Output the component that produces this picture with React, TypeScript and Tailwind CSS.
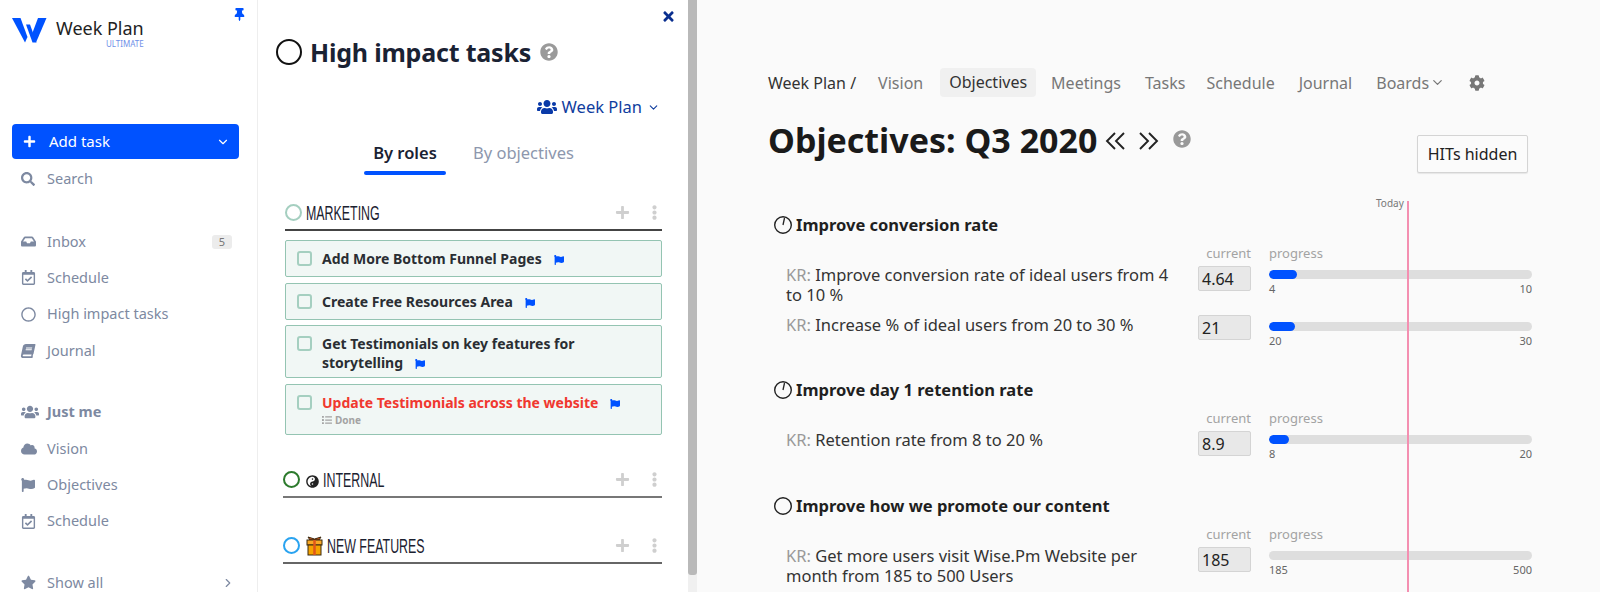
import React from "react";
import { ChevronDown, ChevronRight } from "lucide-react";
import {
  FaPlus, FaSearch, FaInbox, FaRegCalendarCheck, FaRegCircle, FaBook, FaUsers, FaCloud, FaFlag, FaStar,
  FaThumbtack, FaTimes, FaQuestionCircle, FaCog, FaEllipsisV, FaList, FaYinYang,
} from "react-icons/fa";

function Logo() {
  return (
    <svg width="36" height="26" viewBox="0 0 36 26" className="shrink-0">
      <path d="M0 1 H8.5 L15.5 20 L13 25.5 Z" fill="#0052ff" />
      <path d="M14 7.5 H18 L24.5 25.5 H20.5 Z" fill="#0052ff" />
      <path d="M34.5 1 H26 L20 17 L24 25.5 Z" fill="#0052ff" />
    </svg>
  );
}

function NavItem({ icon, label, bold, right }: { icon: React.ReactNode; label: string; bold?: boolean; right?: React.ReactNode }) {
  return (
    <div className={`flex items-center h-[36.4px] pl-[21px] pr-[22px] text-[14.5px] text-[#7d89a1] ${bold ? "font-bold" : ""}`}>
      <span className="w-[26px] flex items-center shrink-0">{icon}</span>
      <span className="flex-1">{label}</span>
      {right}
    </div>
  );
}

function Flag() {
  return <FaFlag size={10} className="text-[#0052ff] ml-3 inline-block align-[-1px]" />;
}

function Task({ title, red, sub }: { title: React.ReactNode; red?: boolean; sub?: boolean }) {
  return (
    <div className="border border-[#94c4b2] rounded-[2px] bg-[#f1f7f5] flex min-h-[37px] pl-[11px] pr-3 pt-[8px] pb-[5px] mb-[5.5px]">
      <span className="w-[15px] h-[15px] border-2 border-[#a5cfc0] rounded-[3px] shrink-0 mt-[2px] mr-[10px]" />
      <div className="flex-1">
        <div className={`text-[14px] leading-[19px] font-bold ${red ? "text-[#f0382f]" : "text-[#2a2e33]"}`}>{title}</div>
        {sub && (
          <div className="flex items-center text-[10px] font-bold leading-[17px] text-[#a3a3a3]">
            <FaList size={10} className="mr-[3px]" />
            Done
          </div>
        )}
      </div>
    </div>
  );
}

function RoleHead({ ring, icon, label, border }: { ring: string; icon?: React.ReactNode; label: string; border: string }) {
  return (
    <div className={`flex items-center h-[31px] border-b-2 ${border}`}>
      <span className={`w-[17px] h-[17px] rounded-full border-2 shrink-0 -mt-[4px] ${ring}`} />
      {icon}
      <span className="ml-[4px] -mt-[3px] inline-block origin-left scale-x-[0.62] whitespace-nowrap text-[20px] leading-[24px] text-[#1b2130] [font-family:'Liberation_Sans',sans-serif]">{label}</span>
      <span className="flex-1" />
      <FaPlus size={15} className="text-[#cfcfcf] mr-[17px] -mt-[4px]" />
      <FaEllipsisV size={15} className="text-[#cfcfcf] -mt-[4px]" />
    </div>
  );
}

function Gift() {
  return (
    <svg width="17" height="20" viewBox="0 0 17 20" className="ml-[6px] -mt-[3px] shrink-0">
      <path d="M4 4 L2 1 L8.5 3 L15 1 L13 4 Z" fill="#e0561a" stroke="#3a2a10" strokeWidth="1" />
      <rect x="1" y="4" width="15" height="5" fill="#f9a825" stroke="#3a2a10" strokeWidth="1" />
      <rect x="2" y="9" width="13" height="10" fill="#f5a300" stroke="#3a2a10" strokeWidth="1" />
      <rect x="7.25" y="4" width="2.5" height="15" fill="#e0561a" />
    </svg>
  );
}

function ObjIcon({ tick }: { tick?: boolean }) {
  return (
    <svg width="20" height="20" viewBox="0 0 20 20" className="shrink-0">
      <circle cx="10" cy="10" r="8.3" fill="none" stroke="#222" strokeWidth="1.4" />
      {tick && <path d="M10 10 L11.5 3" stroke="#222" strokeWidth="1.3" />}
    </svg>
  );
}

function DoubleChevron({ flip }: { flip?: boolean }) {
  return (
    <svg width="20" height="18" viewBox="0 0 20 18" className={`shrink-0 ${flip ? "-scale-x-100" : ""}`}>
      <path d="M10 1 L2 9 L10 17 M19 1 L11 9 L19 17" fill="none" stroke="#222" strokeWidth="1.9" />
    </svg>
  );
}

function KR({ text, value, pct, min, max, head, mt }: { text: string; value: string; pct: number; min: string; max: string; head?: boolean; mt: string }) {
  return (
    <div className={`flex ${mt}`}>
      <div className={`w-[430px] shrink-0 pl-[18px] pr-[28px] text-[16.5px] leading-[20px] text-[#333] ${head ? "pt-[22px]" : ""}`}>
        <span className="text-[#999]">KR: </span>
        {text}
      </div>
      <div className="w-[53px] shrink-0">
        {head && <div className="text-[13px] leading-[20px] h-[20px] text-[#a3a3a3] text-right mb-[3px]">current</div>}
        <div className="h-[25px] border border-[#d4d4d4] rounded-[2px] bg-[#e8e8e8] text-[16px] leading-[25px] pl-[3px] text-[#222]">{value}</div>
      </div>
      <div className="ml-[18px] w-[263px] shrink-0">
        {head && <div className="text-[13px] leading-[20px] h-[20px] text-[#a3a3a3] mb-[3px]">progress</div>}
        <div className="mt-[7px] h-[9px] rounded-full bg-[#dedede] overflow-hidden">
          <div className="h-full rounded-full bg-[#0052ff]" style={{ width: `${pct}px` }} />
        </div>
        <div className="flex justify-between text-[11px] leading-[14px] mt-[3px] text-[#666]">
          <span>{min}</span>
          <span>{max}</span>
        </div>
      </div>
    </div>
  );
}

function Objective({ title, tick, children, mt }: { title: string; tick?: boolean; children: React.ReactNode; mt: string }) {
  return (
    <div className={mt}>
      <div className="flex items-center h-[20px] pl-[5px] gap-[3px] text-[16.5px] font-bold text-[#1f1f1f]">
        <ObjIcon tick={tick} />
        <span>{title}</span>
      </div>
      {children}
    </div>
  );
}

export default function App() {
  return (
    <div className="flex h-[592px] w-[1600px] overflow-hidden bg-white [font-family:'Noto_Sans','Open_Sans',sans-serif]">
      {/* sidebar */}
      <aside className="relative w-[258px] shrink-0 border-r border-[#eeeeee] pt-[17px]">
        <FaThumbtack size={13} className="absolute left-[233px] top-[8px] text-[#0052ff]" />
        <div className="flex pl-[12px] h-[107px]">
          <Logo />
          <div className="ml-[8px] -mt-[1px]">
            <div className="text-[18px] leading-[24px] text-[#222]">Week Plan</div>
            <div className="text-[8px] leading-[8px] text-right text-[#6f8fe8]">ULTIMATE</div>
          </div>
        </div>
        <div className="mx-[12px] h-[35px] w-[227px] rounded-[4px] bg-[#0052ff] text-white flex items-center pl-[11px] pr-[9px] text-[15px]">
          <FaPlus size={13} />
          <span className="ml-[13px] flex-1">Add task</span>
          <ChevronDown size={14} />
        </div>
        <div className="h-[2px]" />
        <NavItem icon={<FaSearch size={14} />} label="Search" />
        <div className="h-[26px]" />
        <NavItem
          icon={<FaInbox size={15} />}
          label="Inbox"
          right={<span className="mr-[3px] px-[7px] rounded-[3px] bg-[#ececec] text-[11px] leading-[14px] text-[#777]">5</span>}
        />
        <NavItem icon={<FaRegCalendarCheck size={15} />} label="Schedule" />
        <NavItem icon={<FaRegCircle size={15} />} label="High impact tasks" />
        <NavItem icon={<FaBook size={14} className="-skew-x-12" />} label="Journal" />
        <div className="h-[25px]" />
        <NavItem icon={<FaUsers size={18} />} label="Just me" bold />
        <NavItem icon={<FaCloud size={16} />} label="Vision" />
        <NavItem icon={<FaFlag size={14} />} label="Objectives" />
        <NavItem icon={<FaRegCalendarCheck size={15} />} label="Schedule" />
        <div className="h-[25px]" />
        <NavItem icon={<FaStar size={15} />} label="Show all" right={<ChevronRight size={14} />} />
      </aside>

      {/* panel */}
      <section className="relative w-[430px] shrink-0 px-[26px] pt-[34px]">
        <FaTimes size={15} className="absolute left-[403px] top-[9px] text-[#0a2f8f]" />
        <div className="-ml-[8px] flex items-center h-[36px]">
          <span className="w-[26px] h-[26px] rounded-full border-2 border-[#111] shrink-0" />
          <h1 className="ml-[8px] text-[25px] leading-[36px] font-bold tracking-[-0.2px] text-[#1a2233]">High impact tasks</h1>
          <FaQuestionCircle size={18} className="ml-[9px] text-[#9a9a9a]" />
        </div>
        <div className="flex items-center justify-end h-[24px] mt-[25px] mr-[2px] text-[16.5px] text-[#0f3d9e]">
          <FaUsers size={20} className="mr-[5px] text-[#0a3aa8]" />
          Week Plan
          <ChevronDown size={13} className="ml-[5px]" />
        </div>
        <div className="flex pl-[80px] mt-[20px] text-[16.5px] leading-[28px]">
          <div className="w-[82px] text-center font-semibold text-[#1a2233]">
            By roles
            <span className="block h-[4px] rounded-full bg-[#0052ff] mt-[4px]" />
          </div>
          <div className="ml-[27px] text-[#8d97ad]">By objectives</div>
        </div>
        <div className="ml-[1px] mt-[25px] w-[377px]">
          <RoleHead ring="border-[#a5cfc0]" label="MARKETING" border="border-[#444]" />
          <div className="h-[9px]" />
          <Task title={<>Add More Bottom Funnel Pages<Flag /></>} />
          <Task title={<>Create Free Resources Area<Flag /></>} />
          <Task title={<>Get Testimonials on key features for storytelling<Flag /></>} />
          <Task red sub title={<>Update Testimonials across the website<Flag /></>} />
          <div className="mt-[32px] -ml-[2px]">
            <RoleHead
              ring="border-[#2c7a2c]"
              icon={<FaYinYang size={13} className="ml-[6px] text-[#222]" />}
              label="INTERNAL"
              border="border-[#777]"
            />
          </div>
          <div className="mt-[35px] -ml-[2px]">
            <RoleHead ring="border-[#29a3f0]" icon={<Gift />} label="NEW FEATURES" border="border-[#666]" />
          </div>
        </div>
      </section>

      {/* panel scrollbar */}
      <div className="w-[9px] shrink-0 bg-[#f0f0f0]">
        <div className="h-[575px] bg-[#b9b9b9] rounded-b-[3px]" />
      </div>

      {/* main */}
      <main className="relative flex-1 bg-[#fafafa] pl-[71px] pr-[68px] pt-[68px] text-[#222]">
        <div className="absolute left-[710px] top-[201px] bottom-0 w-[2px] bg-[#f48fb1]" />
        <div className="absolute left-[679px] top-[196px] text-[10px] leading-[14px] text-[#777]">Today</div>

        <nav className="flex items-center h-[29px] text-[16px] text-[#777]">
          <span className="text-[#333] mr-[12px]">Week Plan /</span>
          <span className="px-[9px] ml-[1px] mr-[8px]">Vision</span>
          <span className="px-[9px] h-[29px] leading-[29px] rounded-[4px] bg-[#f0f0f0] text-[#333] mr-[6px]">Objectives</span>
          <span className="px-[9px] mr-[6px]">Meetings</span>
          <span className="px-[9px] mr-[3px]">Tasks</span>
          <span className="px-[9px] mr-[6px]">Schedule</span>
          <span className="px-[9px] mr-[6px]">Journal</span>
          <span className="flex items-center px-[9px]">Boards<ChevronDown size={15} className="ml-[1px]" /></span>
          <FaCog size={16} className="ml-[15px] text-[#777]" />
        </nav>

        <div className="flex items-start mt-[20px] h-[46px]">
          <h2 className="text-[34px] leading-[46px] font-bold text-[#1a1a1a] whitespace-nowrap">Objectives: Q3 2020</h2>
          <span className="ml-[8px] mt-[15px]"><DoubleChevron /></span>
          <span className="ml-[14px] mt-[15px]"><DoubleChevron flip /></span>
          <FaQuestionCircle size={18} className="ml-[14px] mt-[13px] text-[#999]" />
          <span className="flex-1" />
          <button className="mr-[4px] mt-[18px] h-[38px] w-[111px] shrink-0 border border-[#d4d4d4] bg-[#fbfbfb] text-[16px] text-[#222] rounded-[2px] shadow-[0_1px_1px_rgba(0,0,0,0.08)]">HITs hidden</button>
        </div>

        <Objective title="Improve conversion rate" tick mt="mt-[52px]">
          <KR head text="Improve conversion rate of ideal users from 4 to 10 %" value="4.64" pct={28} min="4" max="10" mt="mt-[8px]" />
          <KR text="Increase % of ideal users from 20 to 30 %" value="21" pct={26} min="20" max="30" mt="mt-[10px]" />
        </Objective>
        <Objective title="Improve day 1 retention rate" tick mt="mt-[32px]">
          <KR head text="Retention rate from 8 to 20 %" value="8.9" pct={20} min="8" max="20" mt="mt-[8px]" />
        </Objective>
        <Objective title="Improve how we promote our content" mt="mt-[35px]">
          <KR head text="Get more users visit Wise.Pm Website per month from 185 to 500 Users" value="185" pct={0} min="185" max="500" mt="mt-[8px]" />
        </Objective>
      </main>
    </div>
  );
}
